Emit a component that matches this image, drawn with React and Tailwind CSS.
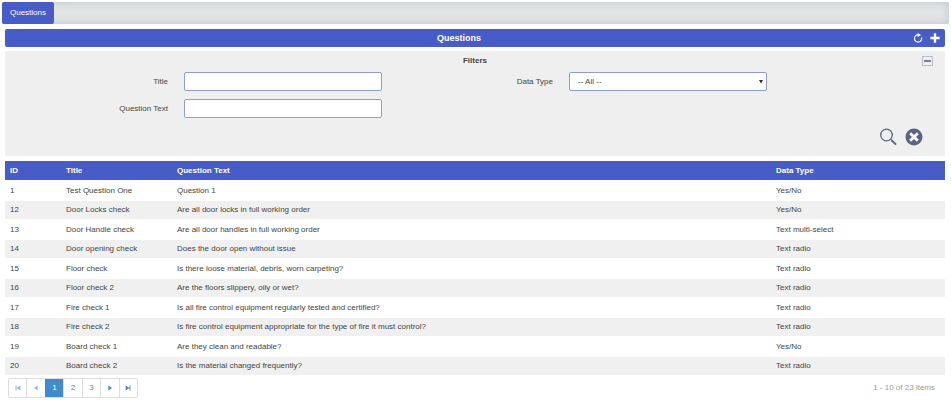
import React, { useState } from "react";

const questions = [
  { id: 1, title: "Test Question One", text: "Question 1", type: "Yes/No" },
  { id: 12, title: "Door Locks check", text: "Are all door locks in full working order", type: "Yes/No" },
  { id: 13, title: "Door Handle check", text: "Are all door handles in full working order", type: "Text multi-select" },
  { id: 14, title: "Door opening check", text: "Does the door open without issue", type: "Text radio" },
  { id: 15, title: "Floor check", text: "Is there loose material, debris, worn carpeting?", type: "Text radio" },
  { id: 16, title: "Floor check 2", text: "Are the floors slippery, oily or wet?", type: "Text radio" },
  { id: 17, title: "Fire check 1", text: "Is all fire control equipment regularly tested and certified?", type: "Text radio" },
  { id: 18, title: "Fire check 2", text: "Is fire control equipment appropriate for the type of fire it must control?", type: "Text radio" },
  { id: 19, title: "Board check 1", text: "Are they clean and readable?", type: "Yes/No" },
  { id: 20, title: "Board check 2", text: "Is the material changed frequently?", type: "Text radio" },
];

const pages = [1, 2, 3];

function RefreshIcon() {
  return (
    <svg className="w-[10px] h-[10px]" viewBox="0 0 20 20" fill="none">
      <path d="M10 3.8A7.2 7.2 0 1 0 17 9" stroke="currentColor" strokeWidth="2.2" />
      <path d="M9.5 0l6.5 3.8-6.5 4z" fill="currentColor" />
    </svg>
  );
}

function PlusIcon() {
  return (
    <svg className="w-[10px] h-[10px]" viewBox="0 0 10 10" fill="currentColor">
      <path d="M3.8 0.3h2.4v3.5h3.5v2.4H6.2v3.5H3.8V6.2H0.3V3.8h3.5z" />
    </svg>
  );
}

function SearchIcon() {
  return (
    <svg className="w-[18px] h-[18px]" viewBox="0 0 18 18" fill="none" stroke="currentColor">
      <circle cx="7.5" cy="7" r="5.8" strokeWidth="1.3" />
      <path d="M11.6 11.2l1.2 1.2" strokeWidth="1.2" />
      <path d="M12.5 12.2l4.6 4.4" strokeWidth="1.9" />
    </svg>
  );
}

function ClearIcon() {
  return (
    <svg className="w-[18px] h-[18px]" viewBox="0 0 18 18">
      <circle cx="9" cy="9" r="8.5" fill="currentColor" />
      <path d="M5.2 5.2l7.6 7.6M12.8 5.2l-7.6 7.6" stroke="#fff" strokeWidth="2.8" />
    </svg>
  );
}

function PagerIcon({ name }) {
  return (
    <svg className="w-[6px] h-[6px]" viewBox="0 0 6 6" fill="currentColor">
      {name === "first" && <path d="M0.5 0.5h1v5h-1zM1.5 3L5.3 0.6v4.8z" />}
      {name === "prev" && <path d="M1 3l3.6-2.4v4.8z" />}
      {name === "next" && <path d="M5 3L1.4 0.6v4.8z" />}
      {name === "last" && <path d="M4.5 0.5h1v5h-1zM4.5 3L0.7 0.6v4.8z" />}
    </svg>
  );
}

function PagerButton({ label, active, disabled, onClick, children }) {
  return (
    <button
      aria-label={label}
      disabled={disabled}
      onClick={onClick}
      className={`flex-1 flex items-center justify-center border-l first:border-l-0 ${
        active
          ? "bg-[#428bca] border-[#428bca] text-white"
          : "bg-white border-[#dddddd] text-[#428bca] disabled:text-[#8ab8de]"
      }`}
    >
      {children}
    </button>
  );
}

export default function App() {
  const [page, setPage] = useState(1);
  const [open, setOpen] = useState(true);

  return (
    <div className="pt-[2px] bg-white text-[8px] leading-[10px] text-[#444444] font-['Liberation_Sans',Arial,sans-serif]">
      {/* Tabs */}
      <nav className="mx-[2px] h-[22px] flex rounded-xs bg-[#e2e4e6] shadow-[inset_0_0_8px_#bfc5c9]">
        <a href="#questions" className="flex items-center px-2 rounded-xs bg-[#475cc7] text-white">
          Questions
        </a>
      </nav>

      <main className="mt-[5px] ml-[5px] mr-[6px]">
        {/* Title bar */}
        <header className="h-[18px] flex items-center pr-[5px] rounded-xs bg-[#475cc7] text-white">
          <h1 className="flex-1 text-center text-[9px] font-bold">Questions</h1>
          <div className="flex gap-[7px]">
            <button aria-label="Refresh">
              <RefreshIcon />
            </button>
            <button aria-label="Add question">
              <PlusIcon />
            </button>
          </div>
        </header>

        {/* Filters */}
        <section className="mt-1 pt-[5px] pb-[10px] rounded-xs bg-[#efefef]">
          <div className="grid grid-cols-[1fr_auto_1fr] items-center px-3">
            <h2 className="col-start-2 font-bold">Filters</h2>
            <button
              aria-label="Toggle filters"
              onClick={() => setOpen(!open)}
              className="justify-self-end w-[11px] h-[10px] flex items-center justify-center border border-[#b9bccb]"
            >
              <span className="w-[7px] h-[2px] bg-[#7b819c]" />
            </button>
          </div>
          {open && (
            <>
              <form className="mt-[6px] grid grid-cols-[163fr_198fr_155fr_198fr_162fr] gap-x-4 gap-y-2 items-center">
                <label htmlFor="title" className="pt-px text-right">Title</label>
                <input id="title" className="w-full h-[19px] px-2 rounded-xs border border-[#8f9bdd] bg-white" />
                <label htmlFor="dataType" className="pt-px text-right">Data Type</label>
                <div className="relative">
                  <select
                    id="dataType"
                    className="block w-full h-[19px] px-2 appearance-none rounded-xs border border-[#8f9bdd] bg-white"
                  >
                    <option>-- All --</option>
                    <option>Yes/No</option>
                    <option>Text radio</option>
                    <option>Text multi-select</option>
                  </select>
                  <svg
                    className="absolute right-[4px] top-2 w-[4px] h-[4px] pointer-events-none"
                    viewBox="0 0 4 4"
                    fill="#333"
                  >
                    <path d="M0 0h4L2 3.6z" />
                  </svg>
                </div>
                <label htmlFor="questionText" className="col-start-1 pt-px text-right">Question Text</label>
                <input id="questionText" className="w-full h-[19px] px-2 rounded-xs border border-[#8f9bdd] bg-white" />
              </form>
              <div className="mt-[10px] pr-[22px] flex justify-end gap-2 text-[#5a6484]">
                <button aria-label="Search">
                  <SearchIcon />
                </button>
                <button aria-label="Clear filters">
                  <ClearIcon />
                </button>
              </div>
            </>
          )}
        </section>

        {/* Questions table */}
        <table className="mt-[5px] w-full table-fixed text-left">
          <thead className="bg-[#475cc7] text-white">
            <tr className="h-[19px]">
              <th className="w-[56px] px-[5px] pt-[2px]">ID</th>
              <th className="w-[111px] px-[5px] pt-[2px]">Title</th>
              <th className="px-[5px] pt-[2px]">Question Text</th>
              <th className="w-[174px] px-[5px] pt-[2px]">Data Type</th>
            </tr>
          </thead>
          <tbody>
            {questions.map((q) => (
              <tr key={q.id} className="h-[20px] even:h-[19px] border-t border-white even:bg-[#f0f0f0]">
                <td className="px-[5px] pt-px">{q.id}</td>
                <td className="px-[5px] pt-px">{q.title}</td>
                <td className="px-[5px] pt-px">{q.text}</td>
                <td className="px-[5px] pt-px">{q.type}</td>
              </tr>
            ))}
          </tbody>
        </table>

        {/* Pager */}
        <footer className="mt-[3px] pl-[3px] pr-[10px] flex items-center justify-between">
          <div className="w-[130px] h-[20px] flex overflow-hidden rounded-xs border border-[#dddddd]">
            <PagerButton label="First page" disabled={page === 1} onClick={() => setPage(1)}>
              <PagerIcon name="first" />
            </PagerButton>
            <PagerButton label="Previous page" disabled={page === 1} onClick={() => setPage(page - 1)}>
              <PagerIcon name="prev" />
            </PagerButton>
            {pages.map((p) => (
              <PagerButton key={p} label={`Page ${p}`} active={p === page} onClick={() => setPage(p)}>
                {p}
              </PagerButton>
            ))}
            <PagerButton label="Next page" disabled={page === 3} onClick={() => setPage(page + 1)}>
              <PagerIcon name="next" />
            </PagerButton>
            <PagerButton label="Last page" disabled={page === 3} onClick={() => setPage(3)}>
              <PagerIcon name="last" />
            </PagerButton>
          </div>
          <span className="text-[#999999]">1 - 10 of 23 items</span>
        </footer>
      </main>
    </div>
  );
}
